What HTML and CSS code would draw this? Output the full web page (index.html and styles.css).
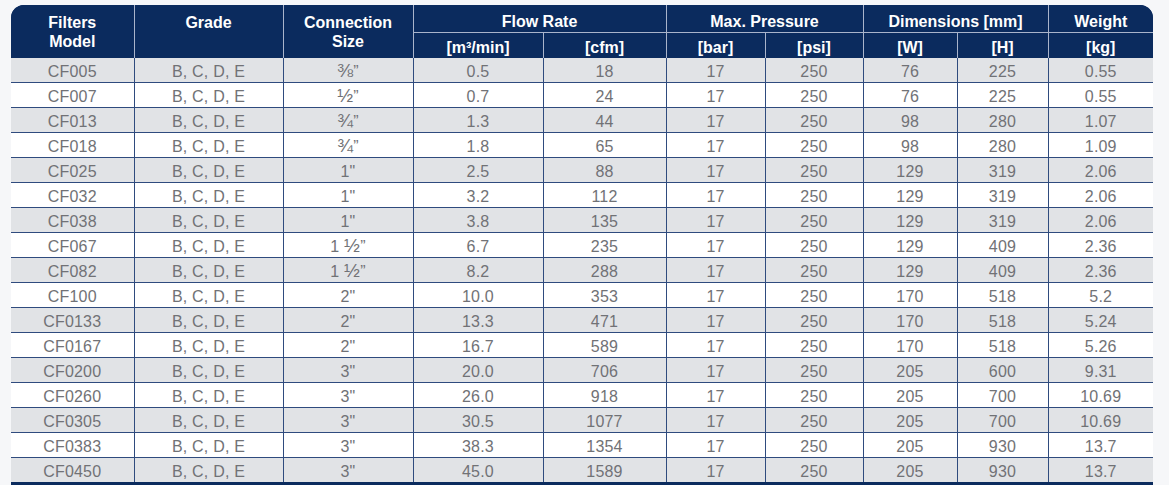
FILE: index.html
```html
<!DOCTYPE html>
<html>
<head>
<meta charset="utf-8">
<link rel="stylesheet" href="styles.css">
</head>
<body>
<div class="wrap">
<table class="spec">
<colgroup>
<col style="width:123px"><col style="width:149px"><col style="width:130px"><col style="width:130px"><col style="width:123px"><col style="width:99px"><col style="width:98px"><col style="width:94px"><col style="width:91px"><col style="width:105px">
</colgroup>
<thead>
<tr class="h1">
<th rowspan="2" class="tall">Filters<br>Model</th>
<th rowspan="2" class="tall top">Grade</th>
<th rowspan="2" class="tall">Connection<br>Size</th>
<th colspan="2">Flow Rate</th>
<th colspan="2">Max. Pressure</th>
<th colspan="2">Dimensions [mm]</th>
<th>Weight</th>
</tr>
<tr class="h2">
<th>[m³/min]</th><th>[cfm]</th><th>[bar]</th><th>[psi]</th><th>[W]</th><th>[H]</th><th>[kg]</th>
</tr>
</thead>
<tbody>
<tr><td>CF005</td><td>B, C, D, E</td><td><span class="frac">⅜</span>”</td><td>0.5</td><td>18</td><td>17</td><td>250</td><td>76</td><td>225</td><td>0.55</td></tr>
<tr><td>CF007</td><td>B, C, D, E</td><td><span class="frac">½</span>”</td><td>0.7</td><td>24</td><td>17</td><td>250</td><td>76</td><td>225</td><td>0.55</td></tr>
<tr><td>CF013</td><td>B, C, D, E</td><td><span class="frac">¾</span>”</td><td>1.3</td><td>44</td><td>17</td><td>250</td><td>98</td><td>280</td><td>1.07</td></tr>
<tr><td>CF018</td><td>B, C, D, E</td><td><span class="frac">¾</span>”</td><td>1.8</td><td>65</td><td>17</td><td>250</td><td>98</td><td>280</td><td>1.09</td></tr>
<tr><td>CF025</td><td>B, C, D, E</td><td>1"</td><td>2.5</td><td>88</td><td>17</td><td>250</td><td>129</td><td>319</td><td>2.06</td></tr>
<tr><td>CF032</td><td>B, C, D, E</td><td>1"</td><td>3.2</td><td>112</td><td>17</td><td>250</td><td>129</td><td>319</td><td>2.06</td></tr>
<tr><td>CF038</td><td>B, C, D, E</td><td>1"</td><td>3.8</td><td>135</td><td>17</td><td>250</td><td>129</td><td>319</td><td>2.06</td></tr>
<tr><td>CF067</td><td>B, C, D, E</td><td>1 <span class="frac">½</span>”</td><td>6.7</td><td>235</td><td>17</td><td>250</td><td>129</td><td>409</td><td>2.36</td></tr>
<tr><td>CF082</td><td>B, C, D, E</td><td>1 <span class="frac">½</span>”</td><td>8.2</td><td>288</td><td>17</td><td>250</td><td>129</td><td>409</td><td>2.36</td></tr>
<tr><td>CF100</td><td>B, C, D, E</td><td>2"</td><td>10.0</td><td>353</td><td>17</td><td>250</td><td>170</td><td>518</td><td>5.2</td></tr>
<tr><td>CF0133</td><td>B, C, D, E</td><td>2"</td><td>13.3</td><td>471</td><td>17</td><td>250</td><td>170</td><td>518</td><td>5.24</td></tr>
<tr><td>CF0167</td><td>B, C, D, E</td><td>2"</td><td>16.7</td><td>589</td><td>17</td><td>250</td><td>170</td><td>518</td><td>5.26</td></tr>
<tr><td>CF0200</td><td>B, C, D, E</td><td>3"</td><td>20.0</td><td>706</td><td>17</td><td>250</td><td>205</td><td>600</td><td>9.31</td></tr>
<tr><td>CF0260</td><td>B, C, D, E</td><td>3"</td><td>26.0</td><td>918</td><td>17</td><td>250</td><td>205</td><td>700</td><td>10.69</td></tr>
<tr><td>CF0305</td><td>B, C, D, E</td><td>3"</td><td>30.5</td><td>1077</td><td>17</td><td>250</td><td>205</td><td>700</td><td>10.69</td></tr>
<tr><td>CF0383</td><td>B, C, D, E</td><td>3"</td><td>38.3</td><td>1354</td><td>17</td><td>250</td><td>205</td><td>930</td><td>13.7</td></tr>
<tr><td>CF0450</td><td>B, C, D, E</td><td>3"</td><td>45.0</td><td>1589</td><td>17</td><td>250</td><td>205</td><td>930</td><td>13.7</td></tr>
</tbody>
</table>
</div>
</body>
</html>
```
FILE: styles.css
```css
html, body {
  margin: 0;
  padding: 0;
  background: #f6f7f9;
}
body {
  padding: 5px 0 0 11px;
  font-family: "Liberation Sans", Arial, sans-serif;
}
.wrap {
  width: 1142px;
  border-radius: 13px 13px 0 0;
  overflow: hidden;
  background: #0b2b5e;
}
.spec {
  width: 1142px;
  table-layout: fixed;
  border-collapse: collapse;
  border-bottom: 3px solid #0b2b5e;
}
.spec th {
  background: #0b2b5e;
  color: #fff;
  font-weight: bold;
  font-size: 16px;
  line-height: 19px;
  padding: 0;
  text-align: center;
  border-left: 1px solid #a9b4cb;
  vertical-align: middle;
}
.spec th:first-child { border-left: none; }
.spec tr.h1 th { height: 22px; padding-top: 5px; }
.spec tr.h1 th.tall { vertical-align: top; padding-top: 8px; }
.spec tr.h1 th:not(.tall) { border-bottom: 1px solid #a9b4cb; }
.spec tr.h2 th { height: 22px; padding-top: 3px; }
.spec tr.h2 th:first-child { border-left: 1px solid #a9b4cb; }
.spec td {
  height: 21px;
  padding: 3px 0 0 0;
  line-height: 18px;
  text-align: center;
  font-size: 16px;
  color: #717276;
  border: 1px solid #2f4b7e;
  letter-spacing: 0.2px;
  vertical-align: middle;
}
.spec td:first-child { border-left: none; }
.spec td:last-child { border-right: none; }
.spec tbody tr:first-child td { border-top: none; }
.spec tbody tr:nth-child(odd) td { background: #e1e3e6; }
.spec tbody tr:nth-child(even) td { background: #ffffff; }
.spec .frac { font-size: 19px; line-height: 18px; }
```
